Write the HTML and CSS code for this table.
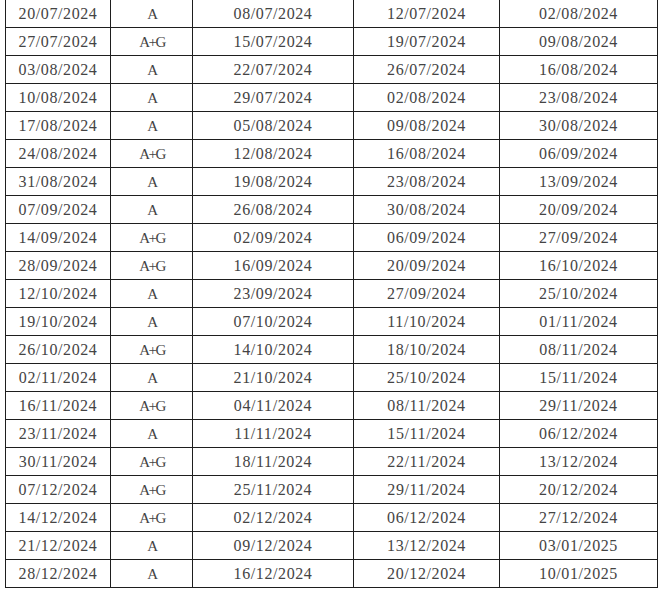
FILE: index.html
```html
<!DOCTYPE html>
<html>
<head>
<meta charset="utf-8">
<link rel="stylesheet" href="styles.css">
</head>
<body>
<table class="schedule">
<colgroup>
<col class="c1"><col class="c2"><col class="c3"><col class="c4"><col class="c5">
</colgroup>
<tbody>
<tr><td>20/07/2024</td><td class="kind">A</td><td>08/07/2024</td><td>12/07/2024</td><td>02/08/2024</td></tr>
<tr><td>27/07/2024</td><td class="kind">A+G</td><td>15/07/2024</td><td>19/07/2024</td><td>09/08/2024</td></tr>
<tr><td>03/08/2024</td><td class="kind">A</td><td>22/07/2024</td><td>26/07/2024</td><td>16/08/2024</td></tr>
<tr><td>10/08/2024</td><td class="kind">A</td><td>29/07/2024</td><td>02/08/2024</td><td>23/08/2024</td></tr>
<tr><td>17/08/2024</td><td class="kind">A</td><td>05/08/2024</td><td>09/08/2024</td><td>30/08/2024</td></tr>
<tr><td>24/08/2024</td><td class="kind">A+G</td><td>12/08/2024</td><td>16/08/2024</td><td>06/09/2024</td></tr>
<tr><td>31/08/2024</td><td class="kind">A</td><td>19/08/2024</td><td>23/08/2024</td><td>13/09/2024</td></tr>
<tr><td>07/09/2024</td><td class="kind">A</td><td>26/08/2024</td><td>30/08/2024</td><td>20/09/2024</td></tr>
<tr><td>14/09/2024</td><td class="kind">A+G</td><td>02/09/2024</td><td>06/09/2024</td><td>27/09/2024</td></tr>
<tr><td>28/09/2024</td><td class="kind">A+G</td><td>16/09/2024</td><td>20/09/2024</td><td>16/10/2024</td></tr>
<tr><td>12/10/2024</td><td class="kind">A</td><td>23/09/2024</td><td>27/09/2024</td><td>25/10/2024</td></tr>
<tr><td>19/10/2024</td><td class="kind">A</td><td>07/10/2024</td><td>11/10/2024</td><td>01/11/2024</td></tr>
<tr><td>26/10/2024</td><td class="kind">A+G</td><td>14/10/2024</td><td>18/10/2024</td><td>08/11/2024</td></tr>
<tr><td>02/11/2024</td><td class="kind">A</td><td>21/10/2024</td><td>25/10/2024</td><td>15/11/2024</td></tr>
<tr><td>16/11/2024</td><td class="kind">A+G</td><td>04/11/2024</td><td>08/11/2024</td><td>29/11/2024</td></tr>
<tr><td>23/11/2024</td><td class="kind">A</td><td>11/11/2024</td><td>15/11/2024</td><td>06/12/2024</td></tr>
<tr><td>30/11/2024</td><td class="kind">A+G</td><td>18/11/2024</td><td>22/11/2024</td><td>13/12/2024</td></tr>
<tr><td>07/12/2024</td><td class="kind">A+G</td><td>25/11/2024</td><td>29/11/2024</td><td>20/12/2024</td></tr>
<tr><td>14/12/2024</td><td class="kind">A+G</td><td>02/12/2024</td><td>06/12/2024</td><td>27/12/2024</td></tr>
<tr><td>21/12/2024</td><td class="kind">A</td><td>09/12/2024</td><td>13/12/2024</td><td>03/01/2025</td></tr>
<tr><td>28/12/2024</td><td class="kind">A</td><td>16/12/2024</td><td>20/12/2024</td><td>10/01/2025</td></tr>
</tbody>
</table>
</body>
</html>
```
FILE: styles.css
```css
html, body {
  margin: 0;
  padding: 0;
  background: #ffffff;
}

body {
  padding-left: 5px;
}

.schedule {
  margin-top: -1px;
  border-collapse: collapse;
  table-layout: fixed;
  width: 653px;
  font-family: "Liberation Serif", "Times New Roman", serif;
  font-size: 16px;
  letter-spacing: 0.6px;
  color: #444444;
}

.c1 { width: 105px; }
.c2 { width: 82px; }
.c3 { width: 161px; }
.c4 { width: 146px; }
.c5 { width: 158px; }

.schedule td {
  border: 1px solid #1e1e1e;
  height: 27px;
  padding: 0;
  text-align: center;
  vertical-align: middle;
  line-height: 16px;
}

.schedule td.kind {
  font-size: 15px;
  letter-spacing: -1.5px;
  padding-left: 1px;
}
```
